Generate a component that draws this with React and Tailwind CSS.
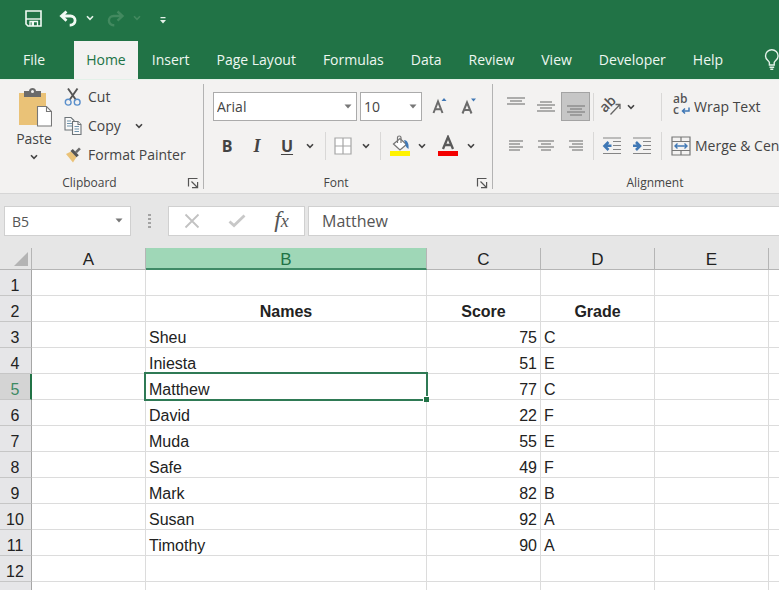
import clsx from "clsx";

const TABS = ["File", "Home", "Insert", "Page Layout", "Formulas", "Data", "Review", "View", "Developer", "Help"];

const COLUMNS = ["A", "B", "C", "D", "E"];

const ROWS = [
    {},
    { B: "Names", C: "Score", D: "Grade", heading: true },
    { B: "Sheu", C: 75, D: "C" },
    { B: "Iniesta", C: 51, D: "E" },
    { B: "Matthew", C: 77, D: "C" },
    { B: "David", C: 22, D: "F" },
    { B: "Muda", C: 55, D: "E" },
    { B: "Safe", C: 49, D: "F" },
    { B: "Mark", C: 82, D: "B" },
    { B: "Susan", C: 92, D: "A" },
    { B: "Timothy", C: 90, D: "A" },
    {},
    {},
];

const SELECTED = { col: "B", row: 5 };

function Chevron({ className }) {
    return (
        <svg viewBox="0 0 8 6" className={clsx("h-[6px] w-2 shrink-0", className)} fill="none" stroke="currentColor" strokeWidth="1.6">
            <path d="M1 1.2 4 4.4 7 1.2" />
        </svg>
    );
}

function Caret({ className }) {
    return (
        <svg viewBox="0 0 8 5" className={clsx("h-[5px] w-2", className)} fill="#777">
            <path d="M.5.5h7L4 4.5z" />
        </svg>
    );
}

function IconButton({ label, className, children }) {
    return (
        <button type="button" aria-label={label} className={clsx("flex h-[29px] shrink-0 items-center justify-center", className)}>
            {children}
        </button>
    );
}

function Divider() {
    return <span className="h-7 w-px shrink-0 bg-[#d9d8d7]" />;
}

// Horizontal rules given as [x1, x2, y]
function Lines({ rows, className }) {
    return (
        <svg viewBox="0 0 20 22" className={clsx("h-[22px] w-5", className)} stroke="#858585" strokeWidth="1.3">
            {rows.map(([x1, x2, y]) => (
                <path key={y} d={`M${x1} ${y}H${x2}`} />
            ))}
        </svg>
    );
}

function Group({ label, launcher, className, children }) {
    return (
        <section aria-label={label} className={clsx("flex shrink-0 flex-col pt-3", className)}>
            <div className="flex-1">{children}</div>
            <div className="flex h-5 items-center">
                <span className="flex-1 text-center text-xs">{label}</span>
                <span className="flex w-6">
                    {launcher && (
                        <button type="button" aria-label={`${label} settings`} className="ml-2">
                            <svg viewBox="0 0 12 12" className="size-3" fill="none" stroke="#555" strokeWidth="1.2">
                                <path d="M1.500 9.500v-8h9M4.500 4.500l6 6M10.600 5v5.600H5" />
                            </svg>
                        </button>
                    )}
                </span>
            </div>
        </section>
    );
}

function TitleBar() {
    return (
        <div className="mb-[5px] flex h-9 items-center pl-[25px]">
            <button type="button" aria-label="Save">
                <svg viewBox="0 0 17 17" className="size-[17px]" fill="none" stroke="#f2faf4" strokeWidth="1.6">
                    <path d="M1 1h15v15H3L1 14z" />
                    <path d="M1 9h15" strokeWidth="1.4" />
                    <path d="M5 16v-4.500h7.500V16" strokeWidth="1.3" />
                    <path d="M7.800 12v4" strokeWidth="2.4" />
                </svg>
            </button>
            <button type="button" aria-label="Undo" className="ml-[17px]">
                <svg viewBox="0 0 19 17" className="h-[17px] w-[19px]" fill="none" stroke="#f2faf4" strokeWidth="2.8">
                    <path d="M7.500 1.500 2.500 6l5 4.700M2.800 6h8.700a4.600 4.600 0 0 1 0 9.200h-.8" />
                </svg>
            </button>
            <button type="button" aria-label="Undo history" className="ml-2 text-[#e4f2e9]">
                <Chevron />
            </button>
            <button type="button" aria-label="Redo" className="ml-3">
                <svg viewBox="0 0 19 17" className="h-[17px] w-[19px]" fill="none" stroke="#42895f" strokeWidth="2.4">
                    <path d="M11.500 1.500 16.500 6l-5 4.700M16.200 6H7.500a4.600 4.600 0 0 0 0 9.200h.8" />
                </svg>
            </button>
            <button type="button" aria-label="Redo history" className="ml-2 text-[#42895f]">
                <Chevron />
            </button>
            <button type="button" aria-label="Customize toolbar" className="ml-[19px] pt-1">
                <svg viewBox="0 0 6 7" className="h-[7px] w-[6px]" fill="#e4f2e9">
                    <path d="M.5 0h5v1.200h-5zM0 3h6L3 6.600z" />
                </svg>
            </button>
        </div>
    );
}

function TabBar() {
    return (
        <nav className="flex h-[38px] pl-[9px] text-sm whitespace-nowrap">
            {TABS.map((tab) => (
                <button
                    key={tab}
                    type="button"
                    className={clsx(
                        "shrink-0",
                        tab === "Home" ? "bg-[#f3f2f1] px-3 text-[#217346]" : "pr-[13px] pl-[14px] text-[#eef7f1]",
                        tab === "File" && "mr-4",
                    )}
                >
                    {tab}
                </button>
            ))}
            <button type="button" aria-label="Tell me" className="ml-7 shrink-0">
                <svg viewBox="0 0 16 22" className="h-[22px] w-4" fill="none" stroke="#e4f2e9" strokeWidth="1.4">
                    <path d="M5.400 16v-2.400C5.200 11.600 1.500 10.800 1.500 7a6.300 6.300 0 0 1 12.600 0c0 3.800-3.700 4.600-3.900 6.600V16zM5.500 18.200h4.700M6.300 20.200h3" />
                </svg>
            </button>
        </nav>
    );
}

function ClipboardGroup() {
    return (
        <Group label="Clipboard" launcher className="w-[203px]">
            <div className="flex">
                <button type="button" className="-mt-1 flex h-[80px] w-[52px] shrink-0 flex-col items-center pl-4 text-sm leading-5">
                    <svg viewBox="0 0 36 40" className="h-10 w-9 shrink-0">
                        <path d="M3 5h27v32H3z" fill="#eac277" />
                        <path d="M8 3h5c0-4 7-4 7 0h5v6H8z" fill="#6b6b6b" />
                        <circle cx="16.500" cy="3.500" r="1.500" fill="#f3f2f1" />
                        <path d="M21.500 18.500h9l5 5v14.500h-14z" fill="#fff" stroke="#777" strokeWidth="1.100" />
                        <path d="M30.500 18.500v5h5" fill="none" stroke="#777" strokeWidth="1.100" />
                    </svg>
                    <span className="mt-px">Paste</span>
                    <Chevron className="mt-[5px]" />
                </button>
                <div className="-mt-[10px] ml-3 flex flex-col text-sm">
                    <button type="button" className="flex h-[29px] items-center gap-[6px]">
                        <svg viewBox="0 0 18 20" className="h-5 w-[18px]" fill="none">
                            <path d="M4 1.500 12 13M13.500 1.500 5.500 13" stroke="#555" strokeWidth="1.900" />
                            <circle cx="4.200" cy="15.200" r="2.900" stroke="#5a8fcb" strokeWidth="1.400" />
                            <circle cx="13.200" cy="15.200" r="2.900" stroke="#5a8fcb" strokeWidth="1.400" />
                        </svg>
                        Cut
                    </button>
                    <button type="button" className="flex h-[29px] items-center gap-[6px]">
                        <svg viewBox="0 0 18 20" className="h-5 w-[18px]" fill="#f9f9f9" stroke="#6d7478" strokeWidth="1.100">
                            <path d="M1 1.500h6l3 3V14H1z" />
                            <path d="M3 5h4M3 7.500h5M3 10h5" stroke="#6f93ac" />
                            <path d="M8.500 5.500h5.500l3 3v10H8.500z" />
                            <path d="M14 5.500v3h3" />
                            <path d="M10.500 10.500h4.500M10.500 13h4.500M10.500 15.500h4.500" stroke="#6f93ac" />
                        </svg>
                        Copy
                        <Chevron className="ml-2" />
                    </button>
                    <button type="button" className="flex h-[29px] items-center gap-[6px] whitespace-nowrap">
                        <svg viewBox="0 0 18 18" className="size-[18px]">
                            <path d="m2 8 5-2.500 5.500 5.500L9 16.500z" fill="#eac277" />
                            <path d="m6.500 5 2.300-2 6 6.200-2.300 2z" fill="#555" />
                            <path d="m11 5.500 4-4 1.800 1.800-4 4z" fill="#6b6b6b" />
                        </svg>
                        Format Painter
                    </button>
                </div>
            </div>
        </Group>
    );
}

function FontGroup() {
    return (
        <Group label="Font" launcher className="w-[288px]">
            <div className="flex items-center pl-[9px]">
                <div className="relative mr-[3px]">
                    <select aria-label="Font family" className="h-[29px] w-36 appearance-none border border-[#ababab] bg-white px-[3px] text-sm">
                        <option>Arial</option>
                    </select>
                    <Caret className="pointer-events-none absolute top-3 right-[5px]" />
                </div>
                <div className="relative">
                    <select aria-label="Font size" className="h-[29px] w-[62px] appearance-none border border-[#ababab] bg-white px-[3px] text-sm">
                        <option>10</option>
                    </select>
                    <Caret className="pointer-events-none absolute top-3 right-[5px]" />
                </div>
                <IconButton label="Increase font size" className="ml-[2px] w-[30px]">
                    <svg viewBox="0 0 18 20" className="h-5 w-[18px]" fill="none">
                        <path d="M3.500 16 8 4.500 12.500 16M5 12.300h6" stroke="#6b6b6b" strokeWidth="2" />
                        <path d="m11.500 4 2.500-3 2.500 3z" fill="#4078b5" />
                    </svg>
                </IconButton>
                <IconButton label="Decrease font size" className="w-[30px]">
                    <svg viewBox="0 0 18 20" className="h-5 w-[18px]" fill="none">
                        <path d="M2.500 16.500 7 5.500l4.500 11M4.200 13h5.600" stroke="#6b6b6b" strokeWidth="2" />
                        <path d="m11 1.500 2.500 3 2.500-3z" fill="#4078b5" />
                    </svg>
                </IconButton>
            </div>
            <div className="mt-[10px] flex items-center pl-2">
                <IconButton label="Bold" className="w-[30px] text-base font-bold">B</IconButton>
                <IconButton label="Italic" className="w-[30px] font-['Liberation_Serif',serif] text-lg font-bold italic">I</IconButton>
                <IconButton label="Underline" className="w-[30px] text-base font-bold underline underline-offset-2">U</IconButton>
                <IconButton label="Underline style" className="w-4">
                    <Chevron />
                </IconButton>
                <span className="w-[7px]" />
                <Divider />
                <IconButton label="Borders" className="w-[34px]">
                    <svg viewBox="0 0 18 18" className="size-[18px]" fill="#fff" stroke="#a6a6a6" strokeWidth="1.200">
                        <path d="M1 1h16v16H1zM9 1v16M1 9h16" />
                    </svg>
                </IconButton>
                <IconButton label="Border style" className="w-3">
                    <Chevron />
                </IconButton>
                <span className="w-2" />
                <Divider />
                <IconButton label="Fill color" className="ml-px w-9">
                    <svg viewBox="0 0 22 22" className="size-[22px]">
                        <path d="m4.500 9 6.500-5.500 6.500 6-6.500 5.500z" fill="#fff" stroke="#777" strokeWidth="1.300" />
                        <path d="M8.500 8V2.500c0-2 3.500-2 3.500 0V8" fill="none" stroke="#777" strokeWidth="1.200" />
                        <path d="M15 5c3.500.5 5 3.500 4.500 9-2-1-3-3-3-5z" fill="#4078b5" />
                        <path d="M1 16h20v5H1z" fill="#fff200" />
                    </svg>
                </IconButton>
                <IconButton label="Fill palette" className="w-2">
                    <Chevron />
                </IconButton>
                <IconButton label="Font color" className="ml-[7px] w-[30px]">
                    <svg viewBox="0 0 22 22" className="size-[22px]">
                        <path d="m6 14 5-12 5 12M7.800 10h6.400" fill="none" stroke="#5a5a5a" strokeWidth="2.300" />
                        <path d="M1 16h20v5H1z" fill="#f30000" />
                    </svg>
                </IconButton>
                <IconButton label="Font palette" className="ml-1 w-2">
                    <Chevron />
                </IconButton>
            </div>
        </Group>
    );
}

function AlignmentGroup() {
    return (
        <Group label="Alignment" className="w-[348px] text-sm whitespace-nowrap">
            <div className="flex items-center pl-2">
                <IconButton label="Top align" className="w-[30px]">
                    <Lines rows={[[1, 19, 2], [4, 16, 5], [1, 19, 8]]} />
                </IconButton>
                <IconButton label="Middle align" className="w-[30px]">
                    <Lines rows={[[4, 16, 6], [1, 19, 9], [4, 16, 12], [1, 19, 15]]} />
                </IconButton>
                <IconButton label="Bottom align" className="w-[29px] border border-[#a3a3a3] bg-[#c6c6c6]">
                    <Lines rows={[[1, 19, 10], [4, 16, 13], [1, 19, 16], [4, 16, 19]]} />
                </IconButton>
                <span className="w-[3px]" />
                <Divider />
                <IconButton label="Orientation" className="ml-[5px] w-[26px]">
                    <svg viewBox="0 0 22 22" className="size-[22px] overflow-visible">
                        <text x="1" y="12" transform="rotate(-45 9 11)" fill="#555" className="font-['Open_Sans',sans-serif] text-sm font-semibold">
                            ab
                        </text>
                        <path d="M9.500 18.500 18.500 9M14.500 8.500h4.500v4.500" fill="none" stroke="#666" strokeWidth="1.300" />
                    </svg>
                </IconButton>
                <IconButton label="Orientation options" className="w-3">
                    <Chevron />
                </IconButton>
                <span className="w-6" />
                <Divider />
                <button type="button" className="ml-[11px] flex h-[29px] items-center gap-[3px]">
                    <span className="flex w-[18px] flex-col pb-1 text-left text-xs leading-[9px] font-semibold text-[#555]">
                        <span>ab</span>
                        <span className="flex items-center gap-[2px]">
                            c
                            <svg viewBox="0 0 9 8" className="mt-1 h-2 w-[9px]" fill="none" stroke="#4078b5" strokeWidth="1.500">
                                <path d="M8 .5V4H1.500M4 1.500 1.500 4 4 6.500" />
                            </svg>
                        </span>
                    </span>
                    Wrap Text
                </button>
            </div>
            <div className="mt-[10px] flex items-center pl-2">
                <IconButton label="Align left" className="w-[30px]">
                    <Lines rows={[[3, 17, 6], [3, 14, 9], [3, 17, 12], [3, 14, 15]]} />
                </IconButton>
                <IconButton label="Align center" className="w-[30px]">
                    <Lines rows={[[2, 18, 6], [5, 15, 9], [2, 18, 12], [5, 15, 15]]} />
                </IconButton>
                <IconButton label="Align right" className="w-[29px]">
                    <Lines rows={[[3, 17, 6], [6, 17, 9], [3, 17, 12], [6, 17, 15]]} />
                </IconButton>
                <span className="w-[3px]" />
                <Divider />
                <IconButton label="Decrease indent" className="ml-[3px] w-[30px]">
                    <svg viewBox="0 0 20 18" className="h-[18px] w-5" fill="none" stroke="#858585" strokeWidth="1.200">
                        <path d="M1 1h18M11 4.500h8M11 8.500h8M11 12.500h8M1 16.500h18" />
                        <path d="M9.500 8.800H3M6.500 5l-4 4 4 4" stroke="#4078b5" strokeWidth="2.600" />
                    </svg>
                </IconButton>
                <IconButton label="Increase indent" className="w-[30px]">
                    <svg viewBox="0 0 20 18" className="h-[18px] w-5" fill="none" stroke="#858585" strokeWidth="1.200">
                        <path d="M1 1h18M11 4.500h8M11 8.500h8M11 12.500h8M1 16.500h18" />
                        <path d="M1 8.800h6.500M4 5l4 4-4 4" stroke="#4078b5" strokeWidth="2.600" />
                    </svg>
                </IconButton>
                <span className="w-1" />
                <Divider />
                <button type="button" className="ml-[9px] flex h-[29px] items-center gap-1">
                    <svg viewBox="0 0 20 20" className="size-5" fill="none" stroke="#777" strokeWidth="1.200">
                        <path d="M1 1h18v18H1zM1 5.500h18M1 14.500h18M10 1v4.500M10 14.500V19" />
                        <path d="M4 10h12M6.500 7.500 4 10l2.500 2.500M13.500 7.500 16 10l-2.500 2.500" stroke="#4078b5" strokeWidth="1.400" />
                    </svg>
                    Merge &amp; Center
                </button>
            </div>
        </Group>
    );
}

function FormulaBar() {
    return (
        <div className="flex h-[54px] items-center bg-[#e6e6e6] pl-1 text-[#555]">
            <div className="relative">
                <input aria-label="Name box" defaultValue="B5" className="h-[30px] w-[127px] border border-[#d0d0d0] bg-white px-[7px] text-sm" />
                <Caret className="pointer-events-none absolute top-3 right-2" />
            </div>
            <svg viewBox="0 0 3 15" className="mx-[17px] h-[15px] w-[3px] shrink-0" fill="#a3a3a3">
                <path d="M0 0h3v2H0zM0 4h3v2H0zM0 8h3v2H0zM0 12h3v2H0z" />
            </svg>
            <div className="flex h-[30px] w-[137px] shrink-0 items-center border border-[#d0d0d0] bg-white">
                <IconButton label="Cancel" className="w-[45px]">
                    <svg viewBox="0 0 16 16" className="size-4" stroke="#c2c2c2" strokeWidth="1.800">
                        <path d="m1.500 1.500 13 13M14.500 1.500l-13 13" />
                    </svg>
                </IconButton>
                <IconButton label="Enter" className="w-[45px]">
                    <svg viewBox="0 0 18 14" className="h-[14px] w-[18px]" fill="none" stroke="#c8c8c8" strokeWidth="2.800">
                        <path d="m1.500 7.500 4.500 4L16.500 1.500" />
                    </svg>
                </IconButton>
                <IconButton label="Insert function" className="w-[45px] pb-1 font-['Liberation_Serif',serif] text-2xl italic">
                    <span>f</span>
                    <span className="pt-1 text-lg">x</span>
                </IconButton>
            </div>
            <input
                aria-label="Formula bar"
                defaultValue="Matthew"
                className="ml-[3px] h-[30px] min-w-0 flex-1 border border-r-0 border-[#d0d0d0] bg-white px-[13px] text-base"
            />
        </div>
    );
}

function Cell({ col, rowNumber, row }) {
    const value = row[col];
    const selected = col === SELECTED.col && rowNumber === SELECTED.row;
    return (
        <td
            className={clsx(
                "h-[26px] border-r border-b border-[#dcdcdc] px-[3px] pt-[6px] leading-[19px]",
                selected && "relative z-10",
                row.heading ? "text-center font-bold" : typeof value === "number" ? "text-right" : "text-left",
            )}
        >
            {value}
            {selected && (
                <>
                    <span className="pointer-events-none absolute -top-[2px] -right-[2px] -bottom-[2px] -left-[2px] border-2 border-[#2f7a55]" />
                    <span className="absolute -right-[3px] -bottom-[3px] size-[6px] border-t border-l border-white bg-[#217346]" />
                </>
            )}
        </td>
    );
}

function Sheet() {
    return (
        <table className="w-full table-fixed border-separate border-spacing-0 bg-white font-['Liberation_Sans',Arial,sans-serif] text-base text-[#222]">
            <colgroup>
                <col className="w-8" />
                <col className="w-[114px]" />
                <col className="w-[281px]" />
                <col className="w-[114px]" />
                <col className="w-[114px]" />
                <col className="w-[114px]" />
                <col />
            </colgroup>
            <thead>
                <tr className="bg-[#e6e6e6]">
                    <th className="h-[22px] border-r border-b border-[#b5b5b5] p-0">
                        <svg viewBox="0 0 14 14" className="ml-auto mr-[3px] size-[14px]" fill="#b4b4b4">
                            <path d="M14 0v14H0z" />
                        </svg>
                    </th>
                    {COLUMNS.map((col) => (
                        <th
                            key={col}
                            scope="col"
                            className={clsx(
                                "h-[22px] border-r p-0 pt-[3px] text-[17px] leading-4 font-normal",
                                col === SELECTED.col
                                    ? "border-b-2 border-r-[#b5b5b5] border-b-[#3f8a66] bg-[#9fd7b7] text-[#217346]"
                                    : "border-b border-[#b5b5b5]",
                            )}
                        >
                            {col}
                        </th>
                    ))}
                    <th className="border-b border-[#b5b5b5] p-0" />
                </tr>
            </thead>
            <tbody>
                {ROWS.map((row, i) => {
                    const rowNumber = i + 1;
                    return (
                        <tr key={rowNumber}>
                            <th
                                scope="row"
                                className={clsx(
                                    "h-[26px] border-b border-b-[#c6c6c6] p-0 pt-[6px] leading-[19px] font-normal",
                                    rowNumber === SELECTED.row
                                        ? "border-r-2 border-r-[#217346] bg-[#d4d4d4] text-[#3d8a63]"
                                        : "border-r border-r-[#a6a6a6] bg-[#e6e6e8] pr-px",
                                )}
                            >
                                {rowNumber}
                            </th>
                            {COLUMNS.map((col) => (
                                <Cell key={col} col={col} rowNumber={rowNumber} row={row} />
                            ))}
                            <td className="border-b border-[#dcdcdc] p-0" />
                        </tr>
                    );
                })}
            </tbody>
        </table>
    );
}

export default function App() {
    return (
        <div className="flex h-screen flex-col overflow-hidden bg-white font-['Open_Sans','Segoe_UI',sans-serif] text-[#444]">
            <header className="shrink-0 overflow-hidden bg-[#217346]">
                <TitleBar />
                <TabBar />
            </header>
            <div className="flex h-[115px] shrink-0 items-stretch overflow-hidden border-t border-b border-t-[#e3f1e8] border-b-[#d6d6d6] bg-[#f3f2f1]">
                <ClipboardGroup />
                <span className="my-1 w-px shrink-0 bg-[#b3b3b3]" />
                <FontGroup />
                <span className="my-1 w-px shrink-0 bg-[#b3b3b3]" />
                <AlignmentGroup />
            </div>
            <FormulaBar />
            <main className="min-h-0 flex-1 overflow-hidden">
                <Sheet />
            </main>
        </div>
    );
}
